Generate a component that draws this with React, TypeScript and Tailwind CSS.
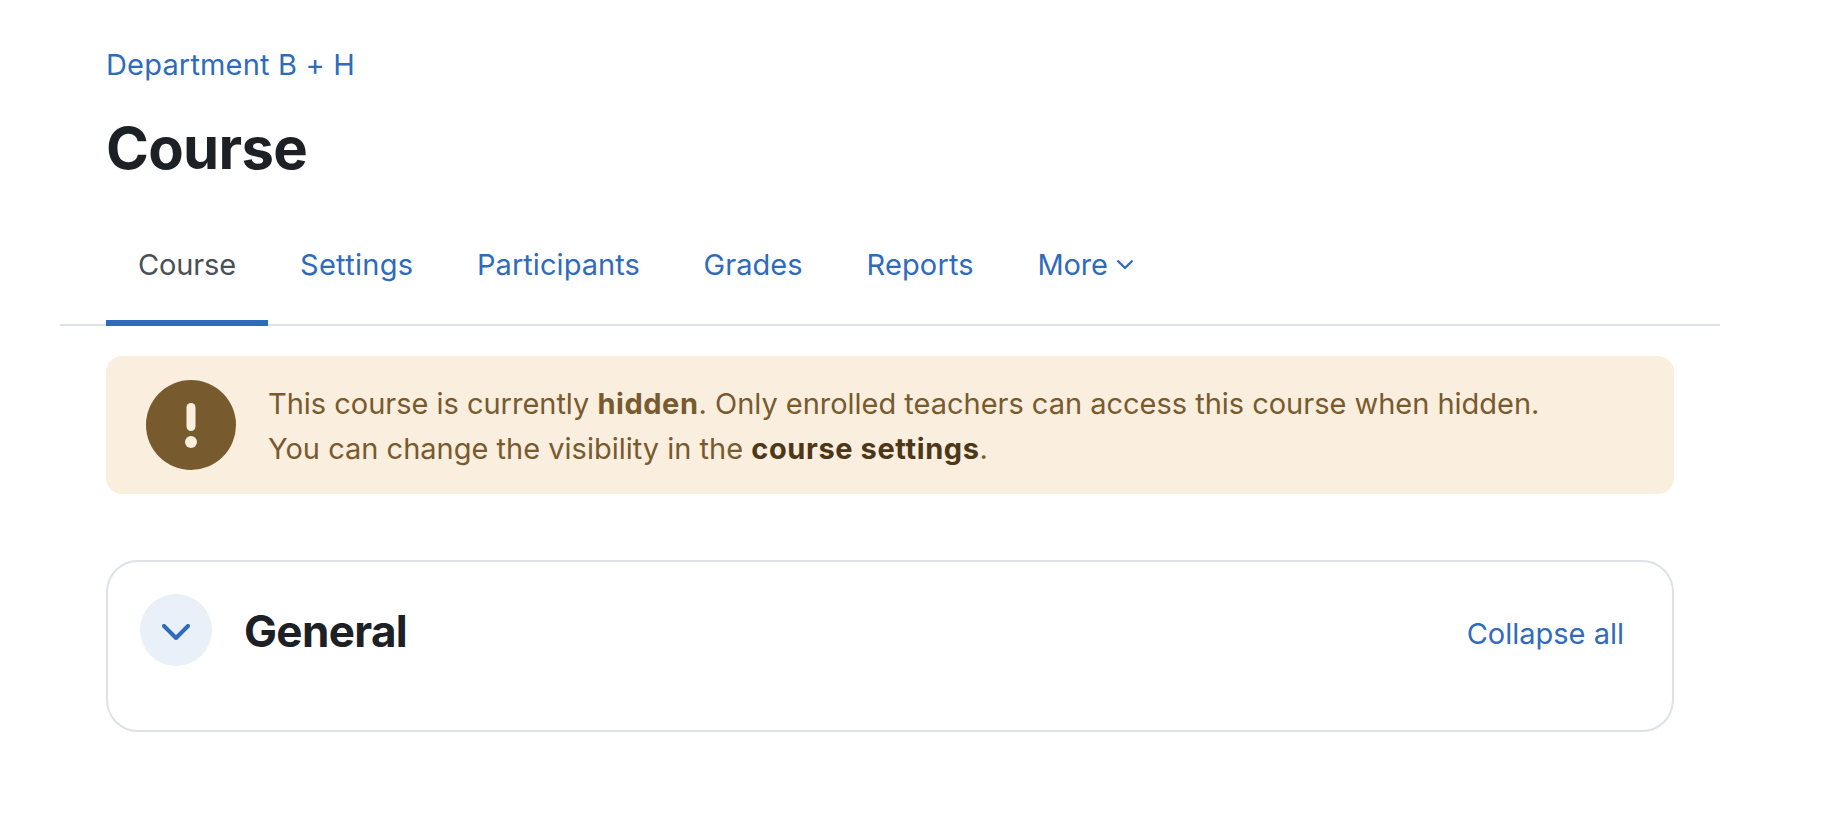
import { ReactNode } from "react";

interface Tab {
  label: string;
  width: string;
  tracking: string;
  active?: boolean;
  menu?: boolean;
}

const TABS: Tab[] = [
  { label: "Course", width: "w-[162px]", tracking: "tracking-[-0.15px]", active: true },
  { label: "Settings", width: "w-[177px]", tracking: "tracking-[0.3px]" },
  { label: "Participants", width: "w-[226.5px]", tracking: "tracking-[0.05px]" },
  { label: "Grades", width: "w-[163px]", tracking: "tracking-[0.05px]" },
  { label: "Reports", width: "w-[171px]", tracking: "tracking-[0.15px]" },
  { label: "More", width: "w-[160px]", tracking: "tracking-[-0.15px]", menu: true },
];

function Card({ children }: { children: ReactNode }) {
  return (
    <section className="mx-[46px] mt-[66px] flex h-[172px] rounded-[32px] border-2 border-[#dee2e6] px-8 pt-8">
      {children}
    </section>
  );
}

export default function App() {
  return (
    <div className="h-[840px] w-[1832px] overflow-hidden bg-white pl-[60px] pr-[112px] font-['Inter',sans-serif] text-[29px] leading-[45px] text-[#1d2125]">
      <nav className="ml-[46px] pt-[42px] text-[#2f6bbc]">
        <a className="whitespace-nowrap tracking-[0.17px]">Department B + H</a>
      </nav>
      <h1 className="ml-[46px] mt-[25px] h-[72px] text-[58px] font-bold leading-[72px] tracking-[-0.7px]">
        <span>Course</span>
      </h1>

      {/* Secondary navigation */}
      <ul className="mt-[22px] flex h-[120px] border-b-2 border-[#dee2e6] pl-[46px]">
        {TABS.map((tab) => (
          <li
            key={tab.label}
            className={`flex h-[120px] shrink-0 items-start whitespace-nowrap px-8 pt-[36px] ${tab.width} ${tab.tracking} ${
              tab.active ? "border-b-[6px] border-[#2f6bbc] text-[#495057]" : "text-[#2f6bbc]"
            }`}
          >
            <span>{tab.label}</span>
            {tab.menu && (
              <svg className="ml-[9px] mt-[18px] shrink-0" width="16" height="10" viewBox="0 0 16 10" fill="none">
                <path d="M1.2 1.2 8 8l6.8-6.8" stroke="currentColor" strokeWidth="2.3" strokeLinecap="round" strokeLinejoin="round" />
              </svg>
            )}
          </li>
        ))}
      </ul>

      {/* Visibility notice */}
      <div className="mx-[46px] mt-[30px] flex h-[138px] rounded-2xl bg-[#faeede] pl-10 pt-6 text-[#785a2f]">
        <svg className="shrink-0" width="90" height="90" viewBox="0 0 90 90">
          <circle cx="45" cy="45" r="45" fill="#785a2f" />
          <rect x="40.5" y="23" width="9" height="28" rx="4.5" fill="#faeede" />
          <circle cx="45" cy="62" r="6" fill="#faeede" />
        </svg>
        <div className="ml-8 mt-px whitespace-nowrap">
          <p>
            <span className="tracking-[-0.02px]">This course is currently </span>
            <strong className="tracking-[0.55px]">hidden</strong>
            <span className="tracking-[-0.02px]">. Only enrolled teachers can access this course when hidden.</span>
          </p>
          <p>
            <span>You can change the visibility in the </span>
            <strong className="tracking-[0.6px] text-[#4c3719]">course settings</strong>
            <span>.</span>
          </p>
        </div>
      </div>

      <Card>
        <button className="flex size-[72px] items-center justify-center rounded-full bg-[#e9f0f8] pt-1 text-[#2f6bbc]">
          <svg width="28" height="16" viewBox="0 0 28 16" fill="none">
            <path d="M2 2l12 12L26 2" stroke="currentColor" strokeWidth="4" strokeLinecap="round" strokeLinejoin="round" />
          </svg>
        </button>
        <h2 className="ml-8 mt-[9px] text-[44px] font-bold leading-[56px] tracking-[-0.65px]">
          <span>General</span>
        </h2>
        <a className="ml-auto mr-4 mt-[17px] whitespace-nowrap text-[#2f6bbc]">Collapse all</a>
      </Card>
    </div>
  );
}
